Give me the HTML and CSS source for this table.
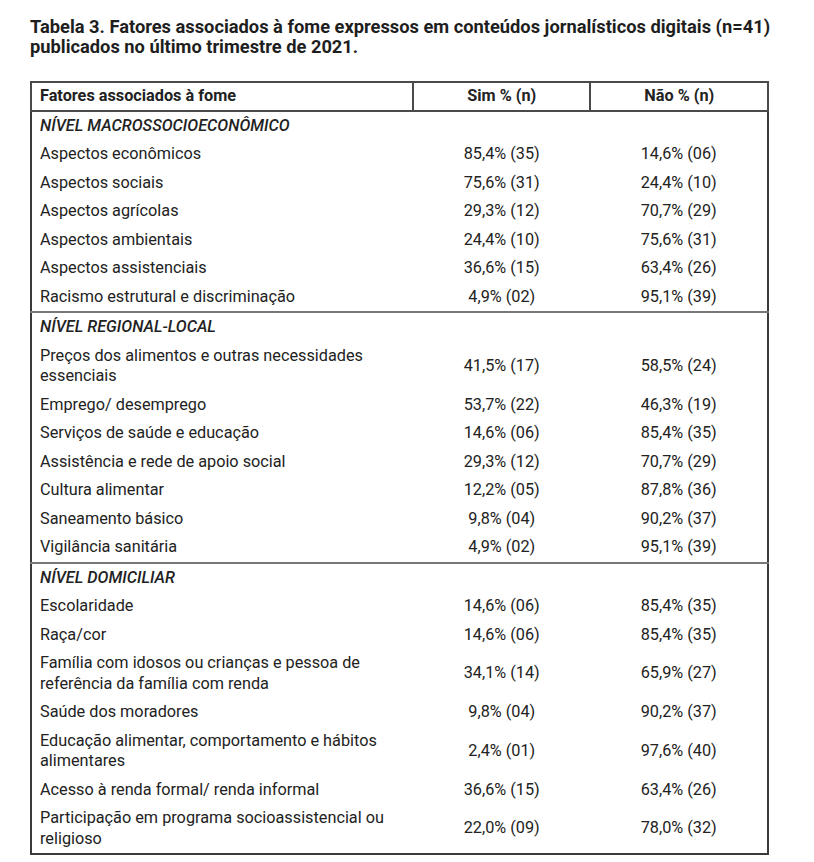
FILE: index.html
```html
<!DOCTYPE html>
<html lang="pt">
<head>
<meta charset="utf-8">
<link rel="stylesheet" href="styles.css">
</head>
<body>
<div class="page">
<h1 class="title">Tabela 3. Fatores associados à fome expressos em conteúdos jornalísticos digitais (n=41) publicados no último trimestre de 2021.</h1>
<table class="tbl">
<colgroup><col class="c1"><col class="c2"><col class="c3"></colgroup>
<thead>
<tr><th class="lbl">Fatores associados à fome</th><th>Sim % (n)</th><th>Não % (n)</th></tr>
</thead>
<tbody>
<tr class="sec"><td colspan="3">NÍVEL MACROSSOCIOECONÔMICO</td></tr>
<tr><td>Aspectos econômicos</td><td>85,4% (35)</td><td>14,6% (06)</td></tr>
<tr><td>Aspectos sociais</td><td>75,6% (31)</td><td>24,4% (10)</td></tr>
<tr><td>Aspectos agrícolas</td><td>29,3% (12)</td><td>70,7% (29)</td></tr>
<tr><td>Aspectos ambientais</td><td>24,4% (10)</td><td>75,6% (31)</td></tr>
<tr><td>Aspectos assistenciais</td><td>36,6% (15)</td><td>63,4% (26)</td></tr>
<tr><td>Racismo estrutural e discriminação</td><td>4,9% (02)</td><td>95,1% (39)</td></tr>
</tbody>
<tbody>
<tr class="sec"><td colspan="3">NÍVEL REGIONAL-LOCAL</td></tr>
<tr><td>Preços dos alimentos e outras necessidades essenciais</td><td>41,5% (17)</td><td>58,5% (24)</td></tr>
<tr><td>Emprego/ desemprego</td><td>53,7% (22)</td><td>46,3% (19)</td></tr>
<tr><td>Serviços de saúde e educação</td><td>14,6% (06)</td><td>85,4% (35)</td></tr>
<tr><td>Assistência e rede de apoio social</td><td>29,3% (12)</td><td>70,7% (29)</td></tr>
<tr><td>Cultura alimentar</td><td>12,2% (05)</td><td>87,8% (36)</td></tr>
<tr><td>Saneamento básico</td><td>9,8% (04)</td><td>90,2% (37)</td></tr>
<tr><td>Vigilância sanitária</td><td>4,9% (02)</td><td>95,1% (39)</td></tr>
</tbody>
<tbody>
<tr class="sec"><td colspan="3">NÍVEL DOMICILIAR</td></tr>
<tr><td>Escolaridade</td><td>14,6% (06)</td><td>85,4% (35)</td></tr>
<tr><td>Raça/cor</td><td>14,6% (06)</td><td>85,4% (35)</td></tr>
<tr><td>Família com idosos ou crianças e pessoa de referência da família com renda</td><td>34,1% (14)</td><td>65,9% (27)</td></tr>
<tr><td>Saúde dos moradores</td><td>9,8% (04)</td><td>90,2% (37)</td></tr>
<tr><td>Educação alimentar, comportamento e hábitos alimentares</td><td>2,4% (01)</td><td>97,6% (40)</td></tr>
<tr><td>Acesso à renda formal/ renda informal</td><td>36,6% (15)</td><td>63,4% (26)</td></tr>
<tr><td>Participação em programa socioassistencial ou religioso</td><td>22,0% (09)</td><td>78,0% (32)</td></tr>
</tbody>
</table>
</div>
</body>
</html>
```
FILE: styles.css
```css
html, body {
  margin: 0;
  padding: 0;
  background: #fff;
}
body {
  font-family: Roboto, "Liberation Sans", sans-serif;
  color: #222;
}
.page {
  padding: 17px 0 0 30px;
  width: 770px;
}
.title {
  margin: 0 0 24px 0;
  font-size: 18.3px;
  line-height: 20px;
  font-weight: 700;
  color: #1e1e1e;
}
.tbl {
  width: 739px;
  border-collapse: collapse;
  border: 2px solid #3a3a3a;
  font-size: 16.25px;
  line-height: 20.5px;
}
.c1 { width: 383px; }
.c2 { width: 178px; }
.c3 { width: 178px; }
.tbl th {
  font-weight: 700;
  text-align: center;
  padding: 3px 8px;
  border: 2px solid #4a4a4a;
  height: 20px;
}
.tbl th.lbl {
  text-align: left;
}
.tbl td {
  padding: 4px 8px 4px 8px;
  text-align: center;
  vertical-align: middle;
}
.tbl td:first-child {
  text-align: left;
  padding-right: 24px;
}
.tbl tbody {
  border-top: 2px solid #777;
}
.tbl tr.sec td {
  font-style: italic;
  font-weight: 500;
  text-align: left;
}
```
